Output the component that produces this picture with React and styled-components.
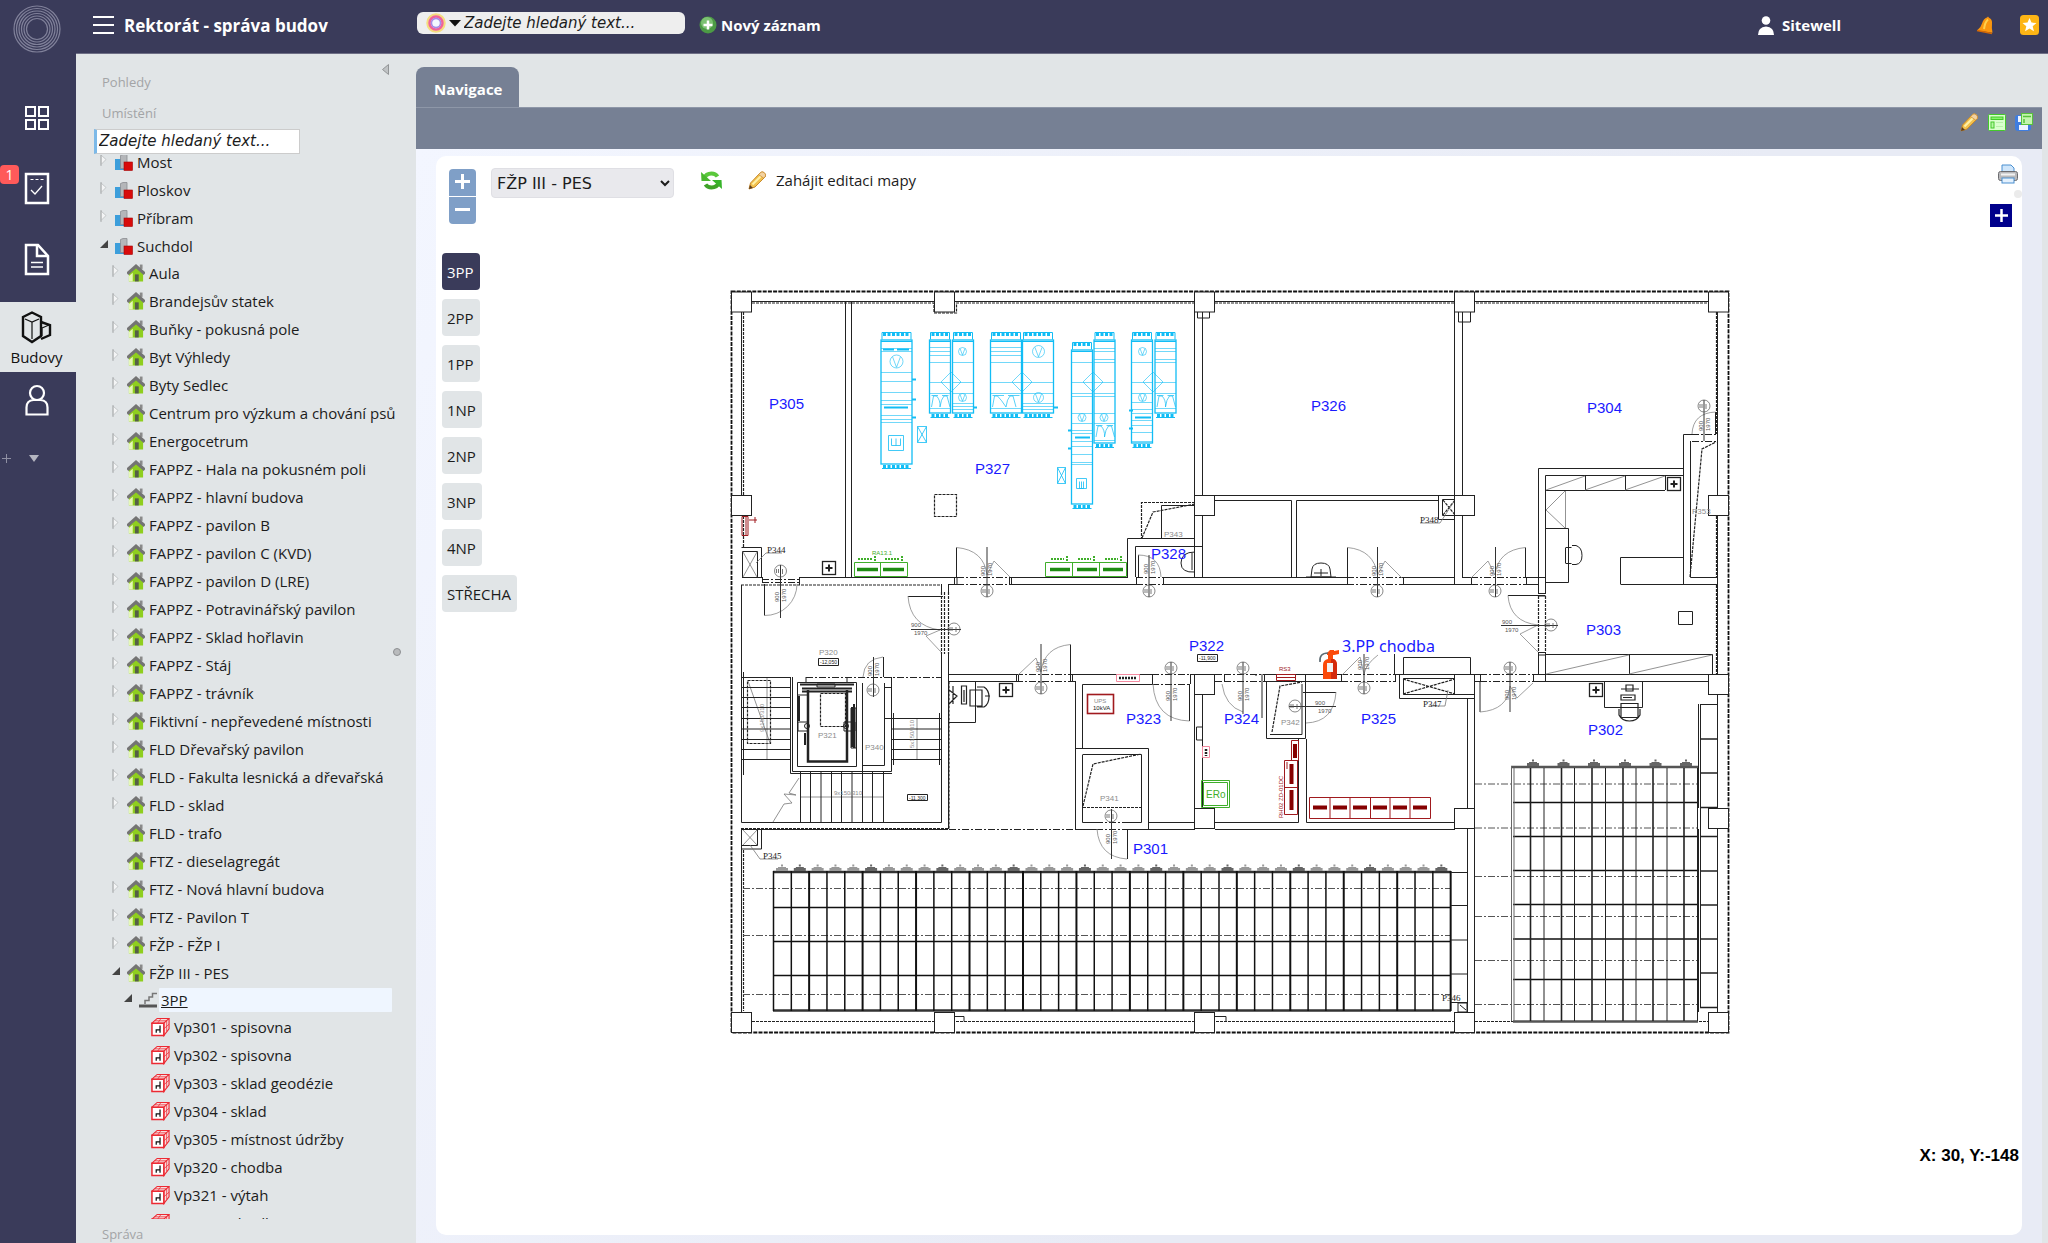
import { useState } from "react";
import styled, { createGlobalStyle } from "styled-components";

const GlobalStyle = createGlobalStyle`
  * {
    box-sizing: border-box;
  }

  body {
    margin: 0;
    font-family: "Open Sans", "Noto Sans", sans-serif;
    font-size: 15px;
    color: #1c1c1c;
    background-color: #e1e5e7;
  }

  button, input, select {
    font: inherit;
    color: inherit;
  }

  button {
    padding: 0;
    border: none;
    background: none;
    cursor: pointer;
  }

  svg {
    display: block;
    flex-shrink: 0;
  }
`;

// LAYOUT

const Page = styled.div`
  display: flex;
  height: 100vh;
`;

const Main = styled.div`
  display: flex;
  flex-direction: column;
  flex: 1;
  min-width: 0;
`;

const Columns = styled.div`
  display: flex;
  flex: 1;
  min-height: 0;
`;

// RAIL

const RailBar = styled.nav`
  display: flex;
  flex-direction: column;
  width: 76px;
  flex-shrink: 0;
  background-color: #3a3b5a;
`;

const Logo = styled.div`
  display: flex;
  justify-content: center;
  height: 82px;
  padding: 5px 3px 0 0;
`;

const RailButton = styled.button`
  position: relative;
  display: flex;
  flex-direction: column;
  align-items: center;
  justify-content: center;
  width: 76px;
  height: ${({ $last }) => ($last ? "56px" : "71px")};
  padding-right: 2px;
  color: #ffffff;
`;

const RailActive = styled(RailButton)`
  height: 70px;
  margin-top: 7px;
  padding: 4px 3px 0 0;
  gap: 3px;
  line-height: 20px;
  color: #111111;
  background-color: #e1e5e7;
`;

const Badge = styled.span`
  position: absolute;
  top: 12px;
  left: 0;
  width: 19px;
  height: 19px;
  border-radius: 4px;
  font-size: 14px;
  line-height: 19px;
  background-color: #ff5a5a;
`;

const RailFoot = styled.div`
  display: flex;
  align-items: center;
  gap: 18px;
  padding: 26px 0 0 2px;
`;

// HEADER

const Header = styled.header`
  display: flex;
  align-items: center;
  height: 54px;
  flex-shrink: 0;
  padding: 0 9px 3px 17px;
  border-bottom: 1px solid #6e6f86;
  font-weight: bold;
  color: #ffffff;
  background-color: #3a3b5a;
`;

const Brand = styled.div`
  display: flex;
  align-items: center;
  gap: 10px;
  width: 324px;
  font-size: 17px;
`;

const SearchBox = styled.label`
  display: flex;
  align-items: center;
  width: 268px;
  height: 22px;
  margin-bottom: 4px;
  padding-left: 9px;
  border-radius: 6px;
  background-color: #eeeeee;
`;

const SearchInput = styled.input`
  width: 100%;
  min-width: 0;
  padding: 0 0 0 2px;
  border: none;
  outline: none;
  font: italic 15px "DejaVu Sans", sans-serif;
  color: #1c1c1c;
  background: none;

  &::placeholder {
    color: #1c1c1c;
    opacity: 1;
  }
`;

const HeaderButton = styled.button`
  display: flex;
  align-items: center;
  gap: ${({ $gap }) => $gap || 4}px;
  margin-left: ${({ $left }) => $left || 0}px;
  font-weight: bold;
`;

const HeaderRight = styled.div`
  display: flex;
  align-items: center;
  margin-left: auto;
`;

// TREE

const Sidebar = styled.aside`
  position: relative;
  display: flex;
  flex-direction: column;
  width: 340px;
  flex-shrink: 0;
  padding: 13px 24px 0 24px;
`;

const SectionTitle = styled.h2`
  margin: 0 0 0 2px;
  font-size: 13px;
  font-weight: normal;
  line-height: 31px;
  color: #a3a4a6;
`;

const TreeSearch = styled.input`
  width: 206px;
  height: 25px;
  flex-shrink: 0;
  margin-left: -6px;
  padding: 0 2px 2px;
  border: 1px solid #cccccc;
  border-left: 3px solid #7cb9e8;
  outline: none;
  font: italic 15px "DejaVu Sans", sans-serif;
  background-color: #ffffff;

  &::placeholder {
    color: #1c1c1c;
    opacity: 1;
  }
`;

const TreeScroll = styled.div`
  flex: 1;
  min-height: 0;
  margin: 1px -12px 0 0;
  padding-right: 12px;
  overflow: hidden;
`;

const TreeList = styled.ul`
  margin: ${({ $root }) => ($root ? "-7px 0 0 0" : "-1px 0 0 12px")};
  padding: 0;
  list-style: none;
`;

const TreeRow = styled.div`
  display: flex;
  align-items: center;
  height: 28px;
`;

const Arrow = styled.span`
  width: 15px;
  flex-shrink: 0;
  padding-bottom: 5px;
`;

const TreeLink = styled.a`
  flex: 1;
  height: 24px;
  padding-left: 2px;
  margin-left: 2px;
  border-radius: 1px;
  line-height: 24px;
  white-space: nowrap;
  color: #1c1c1c;
  text-decoration: ${({ $selected }) => ($selected ? "underline" : "none")};
  background-color: ${({ $selected }) => ($selected ? "#eff6ff" : "transparent")};
`;

const SidebarFoot = styled.div`
  height: 24px;
  overflow: hidden;
`;

const Collapse = styled.button`
  position: absolute;
  top: 10px;
  right: 27px;
`;

const Splitter = styled.span`
  position: absolute;
  top: 594px;
  right: 15px;
  width: 8px;
  height: 8px;
  border: 1px solid #8d8f92;
  border-radius: 50%;
  background-color: #b9bbbd;
`;

// CONTENT

const Content = styled.main`
  display: flex;
  flex-direction: column;
  flex: 1;
  min-width: 0;
  padding: 13px 6px 0 0;
`;

const Tab = styled.button`
  align-self: flex-start;
  height: 40px;
  padding: 4px 17px 0 18px;
  border-radius: 8px 8px 0 0;
  font-weight: bold;
  color: #ffffff;
  background-color: #768094;
`;

const Band = styled.div`
  display: flex;
  justify-content: flex-end;
  gap: 9px;
  height: 42px;
  flex-shrink: 0;
  padding: 5px 9px 0 0;
  border-top: 1px solid #8e97a8;
  background-color: #768094;
`;

const BandButton = styled.button`
  height: 18px;
`;

const Backdrop = styled.div`
  display: flex;
  flex: 1;
  min-height: 0;
  padding: 7px 20px 8px;
  background-image: linear-gradient(120deg, #f3f6ff, #e8ebf5 60%);
`;

const Panel = styled.section`
  display: flex;
  flex-direction: column;
  flex: 1;
  min-width: 0;
  border-radius: 10px;
  background-color: #ffffff;
`;

const MapBar = styled.div`
  display: flex;
  align-items: flex-start;
  height: 97px;
  padding: 12px 0 0 13px;
`;

const ZoomGroup = styled.div`
  display: flex;
  flex-direction: column;
  gap: 1px;
  width: 27px;
  margin: 1px 15px 0 0;
  border-radius: 4px;
  overflow: hidden;
`;

const ZoomButton = styled.button`
  display: flex;
  align-items: center;
  justify-content: center;
  height: 27px;
  padding-bottom: 2px;
  background-color: #7f9fc7;
`;

const BuildingSelect = styled.select`
  width: 183px;
  height: 30px;
  padding: 0 1px;
  border: 1px solid #dfdfe4;
  border-radius: 4px;
  font: 16px "DejaVu Sans", sans-serif;
  background-color: #e9e9ed;
`;

const MapAction = styled.button`
  display: flex;
  align-items: center;
  gap: 9px;
  height: 24px;
  margin-left: ${({ $left }) => $left}px;
`;

const SideTools = styled.div`
  display: flex;
  flex-direction: column;
  align-items: flex-end;
  margin: -4px 0 0 auto;
`;

const PrintButton = styled.button`
  margin-right: 4px;
`;

const Dot = styled.span`
  width: 8px;
  height: 8px;
  margin: 6px 0;
  border-radius: 50%;
  background-color: #ebebeb;
`;

const AddLayer = styled.button`
  display: flex;
  align-items: center;
  justify-content: center;
  width: 22px;
  height: 23px;
  margin-right: 10px;
  background-color: #00008b;
`;

const MapBody = styled.div`
  display: grid;
  justify-items: start;
  align-items: start;
  flex: 1;
  min-height: 0;
`;

const Floors = styled.div`
  grid-area: 1 / 1;
  display: flex;
  flex-direction: column;
  align-items: flex-start;
  gap: 9px;
  padding-left: 6px;
  z-index: 1;
`;

const FloorButton = styled.button`
  height: 37px;
  padding: 0 6px 0 5px;
  border-radius: 4px;
  color: ${({ $active }) => ($active ? "#ffffff" : "#1c1c1c")};
  background-color: ${({ $active }) => ($active ? "#3a3b5a" : "#e1e5e7")};
`;

const PlanHolder = styled.div`
  grid-area: 1 / 1;
  justify-self: center;
  padding-top: 28px;
`;

const Coordinates = styled.div`
  align-self: flex-end;
  padding: 0 3px 69px 0;
  font: bold 17px/20px "Liberation Sans", Arial, sans-serif;
  color: #000000;
`;

// ICONS

const LogoIcon = () => (
  <svg width="48" height="48" viewBox="0 0 48 48" fill="none" stroke="#80819a" strokeWidth="1.200">
    <circle cx="24" cy="24" r="23" />
    <circle cx="24" cy="24" r="20.5" />
    <circle cx="24" cy="24" r="18" />
    <circle cx="24" cy="24" r="15.5" />
    <circle cx="24" cy="24" r="13" />
    <circle cx="24" cy="24" r="10.5" />
  </svg>
);

const GridIcon = () => (
  <svg width="26" height="26" viewBox="0 0 26 26" fill="none" stroke="#fff" strokeWidth="2">
    <path d="M2 2h9v9H2zM15 2h9v9h-9zM2 15h9v9H2zM15 15h9v9h-9z" />
  </svg>
);

const TaskIcon = () => (
  <svg width="26" height="33" viewBox="0 0 26 33" fill="none" stroke="#fff">
    <path d="M2 2h22v29H2z" strokeWidth="2.5" />
    <path d="M6.500 7.500h13" strokeDasharray="3 2" />
    <path d="M7 18l4 4 7-8" strokeWidth="1.300" />
  </svg>
);

const DocIcon = () => (
  <svg width="26" height="33" viewBox="0 0 26 33" fill="none" stroke="#fff" strokeWidth="2.500">
    <path d="M2 2h12l10 11v18H2z" />
    <path d="M13 2v11h11" />
    <path d="M7 19.500h12M7 24h12" strokeWidth="1.300" />
  </svg>
);

const BuildingIcon = () => (
  <svg width="31" height="33" viewBox="0 0 31 33" fill="none" stroke="#111" strokeWidth="2.400">
    <path d="M2 6l9-4.500L20 6v19l-9 6-9-6z" />
    <path d="M20 11l9 3v10l-9 4" />
    <path d="M4 8l7 3 7-3M11 11v17M21 17l7-3M21 17v8" strokeWidth="1.200" />
  </svg>
);

const PersonIcon = () => (
  <svg width="26" height="32" viewBox="0 0 26 32" fill="none" stroke="#fff" strokeWidth="2.200">
    <circle cx="13" cy="9" r="7" />
    <path d="M2.500 30.500v-7q0-7 7-7.500h7q7 .5 7 7.500v7z" />
  </svg>
);

const MenuIcon = () => (
  <svg width="21" height="20" viewBox="0 0 21 20" stroke="#fff" strokeWidth="2">
    <path d="M0 2h21M0 10h21M0 18h21" />
  </svg>
);

const WheelIcon = () => (
  <svg width="20" height="20" viewBox="0 0 20 20" fill="none">
    <circle cx="10" cy="10" r="8.500" stroke="#f5dd7e" strokeWidth="2.500" />
    <circle cx="10" cy="10" r="6.500" stroke="#f0639a" strokeWidth="2.500" />
    <circle cx="10" cy="10" r="4.500" stroke="#a78be8" strokeWidth="1.800" />
    <circle cx="10" cy="10" r="3.500" fill="#f3f8ff" />
  </svg>
);

const PlusBall = () => (
  <svg width="18" height="18" viewBox="0 0 18 18">
    <circle cx="9" cy="9" r="8.500" fill="#4c9a45" />
    <circle cx="8" cy="7" r="6" fill="#7cc172" />
    <path d="M9 4.500v9M4.500 9h9" stroke="#fff" strokeWidth="2.500" />
  </svg>
);

const UserIcon = () => (
  <svg width="16" height="19" viewBox="0 0 16 19" fill="#fff">
    <circle cx="8" cy="4.500" r="4.300" />
    <path d="M0 19q0-8 8-8.500 8 .5 8 8.500z" />
  </svg>
);

const BellIcon = () => (
  <svg width="18" height="19" viewBox="0 0 18 19">
    <path d="M1 14.500q4-3 5-7 1.500-5 5-6l1-1 1 1.300q3.500 1.500 3 6-.5 4 .5 9z" fill="#f9960f" />
    <path d="M8 13q1-7 4-9.500" stroke="#ffd04d" strokeWidth="2" fill="none" />
    <path d="M1 14.500l15 3" stroke="#d66a05" strokeWidth="1.500" />
  </svg>
);

const StarIcon = () => (
  <svg width="19" height="20" viewBox="0 0 19 20">
    <rect width="19" height="20" rx="3.500" fill="#fdb515" />
    <path d="M9.500 3l2 4.600 5 .4-3.800 3.300 1.200 5-4.400-2.700-4.400 2.700 1.200-5L2.500 8l5-.4z" fill="#fff" />
  </svg>
);

const PencilIcon = () => (
  <svg width="19" height="19" viewBox="0 0 19 19">
    <path d="M1 18l1.500-6L12 2q2-2 4-.5t1.500 4L7 16z" fill="#f2c14e" stroke="#c98a2b" />
    <path d="M4.500 13.500L14 4" stroke="#fff0a8" strokeWidth="2" />
    <path d="M12 2q2-2 4-.5t1.500 4L15.500 7 10.500 3.500z" fill="#f3d2a0" stroke="#c98a2b" strokeWidth=".7" />
    <path d="M1 18l1-4 3 3z" fill="#5c3d20" />
  </svg>
);

const FormIcon = () => (
  <svg width="18" height="17" viewBox="0 0 18 17" stroke="#44c92a">
    <rect x=".5" y=".5" width="17" height="16" rx="1" fill="#d9ffcd" />
    <rect x="3" y="3" width="12" height="2.500" fill="#86f56a" />
    <rect x="3" y="8" width="3" height="6" fill="#b5f7a4" />
    <path d="M8 8.500h7M8 12.500h7" stroke="#b9f2aa" />
  </svg>
);

const SaveFormIcon = () => (
  <svg width="18" height="18" viewBox="0 0 18 18">
    <rect x="0" y="2" width="16" height="16" rx="3" fill="#3f7de0" />
    <path d="M3 3h4v6H3zM4 12h9v5H4z" fill="#eef4ff" />
    <rect x="6.500" y=".5" width="11" height="11" fill="#c3f5ae" stroke="#58c23c" />
    <path d="M8 3.500h8M9 6v4" stroke="#58c23c" strokeWidth="1.500" />
  </svg>
);

const RefreshIcon = () => (
  <svg width="21" height="19" viewBox="0 0 21 19">
    <path d="M3 7.500Q5 2.500 10.500 2.500q4 0 6 3" fill="none" stroke="#5bc83c" strokeWidth="4" />
    <path d="M0 1l.5 9H10z" fill="#4ab82e" />
    <path d="M18 11.500q-2 5-7.500 5-4 0-6-3" fill="none" stroke="#3fa328" strokeWidth="4" />
    <path d="M21 18l-.5-9H11z" fill="#38b42a" />
  </svg>
);

const PrinterIcon = () => (
  <svg width="20" height="20" viewBox="0 0 20 20">
    <path d="M4 9V1h9l3 3v5z" fill="#cfe6fb" stroke="#4a8fd0" />
    <rect x=".5" y="7.500" width="19" height="9" rx="2" fill="#b9b9bb" stroke="#6c6c70" />
    <path d="M3 10.500h14" stroke="#f2f2f2" strokeWidth="2" />
    <rect x="4" y="14" width="12" height="5" fill="#e4f1fd" stroke="#4a8fd0" />
  </svg>
);

const SiteIcon = () => (
  <svg width="18" height="17" viewBox="0 0 18 17">
    <rect x="0" y="5" width="9" height="11" fill="#3c9edb" />
    <path d="M5.500 1.500L8 .5h4v14H5.500z" fill="#b4b6b9" stroke="#8b8d90" strokeWidth=".8" />
    <rect x="9" y="8" width="8.500" height="8.500" fill="#d80b0b" stroke="#a30606" strokeWidth=".6" />
  </svg>
);

const HouseIcon = () => (
  <svg width="18" height="18" viewBox="1 0 16 16.500">
    <path d="M2.500 8L9 3l6.500 5v8h-13z" fill="#8fce1e" />
    <path d="M2.500 11L6 8v8H2.500z" fill="#e6f7b8" />
    <path d="M12.500 0.500h2.500v4h-2.500z" fill="#8a8a8a" />
    <path d="M1 9l8-7 8 7" fill="none" stroke="#747474" strokeWidth="3" />
    <rect x="8" y="9.500" width="3.500" height="6.500" fill="#555f47" />
  </svg>
);

const StairsIcon = () => (
  <svg width="18" height="16" viewBox="0 0 18 16" fill="none">
    <path d="M0 14h18" stroke="#555" strokeWidth="3" />
    <path d="M6 12V8.500h4V5h3.500V1.500H18" stroke="#777" strokeWidth="1.500" />
  </svg>
);

const RoomIcon = () => (
  <svg width="19" height="20" viewBox="0 0 20 20" fill="none" stroke="#ec2a33">
    <path d="M1 6l5.500-5H19l-5.500 5zM19 1v11l-5.500 7V6" fill="#f7dcde" strokeWidth="1.200" />
    <path d="M1 6h12.500v13H1z" fill="#fff" strokeWidth="1.600" />
    <path d="M10.500 1L7 6M4 3.500h12M16.500 3.500v11M13.500 12l5.500-5" strokeWidth=".8" />
    <path d="M9.500 8.500v7.500M5.500 16v-3h4" stroke="#111" strokeWidth="1.300" />
  </svg>
);

const icons = { site: SiteIcon, house: HouseIcon, stairs: StairsIcon, room: RoomIcon };

const ClosedArrow = () => (
  <svg width="7" height="12" viewBox="0 0 7 12">
    <path d="M1 1l5 4.500-5 5z" fill="#f4f5f6" stroke="#b9bcbe" strokeWidth=".8" />
    <path d="M1 0v12" stroke="#a9acae" />
  </svg>
);

const OpenArrow = () => (
  <svg width="9" height="8" viewBox="0 0 9 8">
    <path d="M8 0v8H0z" fill="#444" />
  </svg>
);

// DATA

const house = (name, closed = true) => ({ name, icon: "house", closed });
const room = (name) => ({ name, icon: "room" });

const tree = [
  { name: "Most", icon: "site", closed: true },
  { name: "Ploskov", icon: "site", closed: true },
  { name: "Příbram", icon: "site", closed: true },
  {
    name: "Suchdol",
    icon: "site",
    children: [
      house("Aula"),
      house("Brandejsův statek"),
      house("Buňky - pokusná pole"),
      house("Byt Výhledy"),
      house("Byty Sedlec"),
      house("Centrum pro výzkum a chování psů"),
      house("Energocetrum"),
      house("FAPPZ - Hala na pokusném poli"),
      house("FAPPZ - hlavní budova"),
      house("FAPPZ - pavilon B"),
      house("FAPPZ - pavilon C (KVD)"),
      house("FAPPZ - pavilon D (LRE)"),
      house("FAPPZ - Potravinářský pavilon"),
      house("FAPPZ - Sklad hořlavin"),
      house("FAPPZ - Stáj"),
      house("FAPPZ - trávník"),
      house("Fiktivní - nepřevedené místnosti"),
      house("FLD Dřevařský pavilon"),
      house("FLD - Fakulta lesnická a dřevařská"),
      house("FLD - sklad"),
      house("FLD - trafo", false),
      house("FTZ - dieselagregát", false),
      house("FTZ - Nová hlavní budova"),
      house("FTZ - Pavilon T"),
      house("FŽP - FŽP I"),
      {
        name: "FŽP III - PES",
        icon: "house",
        children: [
          {
            name: "3PP",
            icon: "stairs",
            selected: true,
            children: [
              room("Vp301 - spisovna"),
              room("Vp302 - spisovna"),
              room("Vp303 - sklad geodézie"),
              room("Vp304 - sklad"),
              room("Vp305 - místnost údržby"),
              room("Vp320 - chodba"),
              room("Vp321 - výtah"),
              room("Vp322 - chodba"),
            ],
          },
        ],
      },
    ],
  },
];

const floors = ["3PP", "2PP", "1PP", "1NP", "2NP", "3NP", "4NP", "STŘECHA"];

const Branch = ({ items, root }) => (
  <TreeList $root={root}>
    {items.map((item) => {
      const Icon = icons[item.icon];
      return (
        <li key={item.name}>
          <TreeRow>
            <Arrow>
              {item.closed && <ClosedArrow />}
              {item.children && <OpenArrow />}
            </Arrow>
            <Icon />
            <TreeLink href="#" $selected={item.selected}>{item.name}</TreeLink>
          </TreeRow>
          {item.children && <Branch items={item.children} />}
        </li>
      );
    })}
  </TreeList>
);

// FLOOR PLAN

const PlanText = styled.text`
  font-family: "Liberation Sans", Arial, sans-serif;
  font-size: 15px;
  fill: #1a1aff;
`;

const HallText = styled.text`
  font-family: "Noto Sans", sans-serif;
  font-size: 16px;
  fill: #1a1aff;
`;

const NoteText = styled.text`
  font-family: "Liberation Sans", Arial, sans-serif;
  font-size: ${({ $size }) => $size || 8}px;
  fill: ${({ $fill }) => $fill || "#8c8c8c"};
`;

const SerifNote = styled.text`
  font-family: "Liberation Serif", serif;
  font-size: 9px;
  fill: #222222;
`;

const labels = [
  ["P305", 769, 409], ["P327", 975, 474], ["P328", 1151, 559], ["P326", 1311, 411],
  ["P304", 1587, 413], ["P322", 1189, 651], ["P323", 1126, 724], ["P324", 1224, 724],
  ["P325", 1361, 724], ["P303", 1586, 635], ["P302", 1588, 735], ["P301", 1133, 854],
];

const notes = [
  ["P320", 819, 655], ["P321", 818, 738], ["P340", 865, 750], ["P341", 1100, 801],
  ["P342", 1281, 725], ["P343", 1164, 537], ["P353", 1692, 514],
];

const serifNotes = [
  ["P344", 767, 553], ["P345", 763, 859], ["P346", 1442, 1001], ["P347", 1423, 707], ["P348", 1420, 523],
];

// [x, y] of the top left corner, all 20 x 20
const pillars = [
  [731.5, 292], [934.5, 292], [1194.5, 292], [1454.5, 292], [1708.5, 292],
  [731.5, 495.5], [1194.5, 495.5], [1454.5, 495.5], [1708.5, 495.5],
  [1194.5, 674.5], [1454.5, 674.5], [1708.5, 674.5],
  [1194.5, 808.5], [1454.5, 808.5], [1708.5, 808.5],
  [731.5, 1012.5], [934.5, 1012.5], [1194.5, 1012.5], [1454.5, 1012.5], [1708.5, 1012.5],
];

const walls = [
  // outer walls, inner face
  "M752 301.500H935M955 301.500H1195M1215 301.500H1455M1475 301.500H1708",
  "M741.500 312V495M741.500 829V1012M1717.500 312V495M1717.500 516V674M1717.500 695V808M1717.500 829V1012",
  // between P305 and P327
  "M845.500 302V577M851.500 302V577",
  // corridor, north side
  "M762 577.500H742M799 577.500H957M1011 577.500H1128M1163 577.500H1347M1403 577.500H1455M1462 577.500H1471M1526 577.500H1545",
  "M948 584.500H957M1011 584.500H1137M1163 584.500H1347M1403 584.500H1471M1526 584.500H1538",
  "M957 577v8M954.500 577v8M1011.500 577v8M1009.500 577v8M1136.500 577v8M1163.500 577v8M1347.500 577v8M1403.500 577v8M1471.500 577v8M1526.500 577v8M799.500 577v8M762.500 577v6",
  "M1194.500 312V577M1202.500 312V577M1454.500 312V585M1462.500 312V577",
  "M1215 495.500H1455M1215 500.500H1291.500V577M1296.500 577V500.500H1438",
  "M1438.500 496V519.500H1455M1442.500 499.500h12v16h-12z",
  // P304 and P303
  "M1538.500 593V468.500H1683M1545.500 593V475.500H1683M1538 593.500h8M1538 596h8M1538.500 652V675M1545.500 652V682M1538 652.500h8M1538 655h8",
  "M1546 490.500H1665M1585.500 476V490M1625.500 476V490M1665.500 476V490",
  "M1692 434.500H1683.500V584.500M1690.500 441V577.500H1717M1620.500 584.500H1717M1683 557.500H1620.500V584",
  "M1546 528.500H1568.500V582.500H1546M1678.500 611.500h14v13h-14z",
  "M1546 654.500H1712.500V674M1629.500 655V674",
  // hall and stairs
  "M741.500 585V822.500H941.500V654M941.500 584V592M948.500 584V592M948.500 654V829M741 829.500H948",
  "M741.500 547.500H761.500V577M742.500 551.500h15v26h-15zM742 849H761.500V829M742 845.500h15.500V829",
  // corridor, south side
  "M948 674.500H1016M1072 674.500H1152M1190 674.500H1195M1215 674.500H1222M1264 674.500H1341M1395 674.500H1455M1475 674.500H1480M1533 674.500H1708",
  "M948 681.500H1016M1072 681.500H1076M1215 681.500H1222M1264 681.500H1341M1475 681.500H1480M1533 681.500H1708",
  "M1016.500 674v8M1018.500 674v8M1070.500 674v8M1072.500 674v8M1152.500 674v10M1190.500 674v10M1224.500 674v8M1264.500 674v8M1262 674v44M1341.500 674v8M1395.500 674v8M1480.500 674v8M1533.500 674v8",
  "M1075.500 681V829M1082.500 748V684.500H1152M1076 748.500H1148.500V829M1082.500 754.500H1141.500V822.500H1128M1096 822.500H1082.500V755M1076 829.500H1096M1128 829.500H1195",
  "M1148 822.500H1195M1215 829.500H1455M1215 822.500H1298.500V739M1306.500 739V822.500H1455",
  "M1194.500 695V808M1202.500 695V808M1266.500 682V738.500H1305.500V674M1270 734.500H1302V684",
  "M1399.500 675V698.500H1475M1403.500 678.500h52v16h-52zM1403.500 674V657.500H1470.500V674",
  "M1467.500 698V808M1474.500 695V808M1467.500 829V1012M1474.500 829V1012",
  // P328 and P343
  "M1127.500 577V538.500H1195M1135.500 577V546.500H1202M1161.500 538V505.500H1195",
  // lift shaft
  "M790.500 677V773.500H892M792.500 677V771.500H891.500V677M797.500 682.500h59v84h-59zM862.500 683V765.500H884.500V683M862.500 765V822",
  "M948 722.500H975.500V682M1604.500 682V707.500H1642.500V682",
  // shelves by the windows
  "M1698.500 704V808M1700.500 704.500H1717M1700.500 704V1008M1698.500 829V1012",
  "M955 1016.500h9v5M1215 1016.500h11v5",
  "M1197.500 312v6h12v-6M1458.500 312v10h12v-10",
].join("");

const dashed = [
  "M752 303H934V313H956.500V303H1195M1215 303H1455M1476 303H1708M741 585H941",
  "M743.500 312V495M743.500 516V547M743.500 850V1011M1716.500 312V434M1716.500 585V674M1716.500 516V577",
  "M752 1021.500H935M956 1021.500H1195M1216 1021.500H1455M1475 1021.500H1708",
  "M934.500 494.500h22v22h-22zM741 828.500H949V682M948.500 592V654M944.500 592V654M941.500 592V654",
  "M1195 502.500H1141.500V539M1142 538l11-26 42-8M1083 806l10-42 48-10M1083 807.500H1141",
  "M1272 732l8-46 22-4M1690 577l12-128 14-7M1538.500 596V652M1545.500 596V652",
  "M747.500 680.500h23v63h-23zM820.500 693.500h25v33h-25z",
  "M1403 679l52 15M1403 694l52-15M1443 500l12 15M1443 515l12-15",
].join("");

const dashDot = [
  "M957 577.500H1011M957 584.500H1011M1136 577.500H1163M1136 584.500H1163M1347 577.500H1403M1347 584.500H1403M1471 577.500H1526M1471 584.500H1526",
  "M1016 674.500H1072M1016 681.500H1072M1152 674.500H1190M1152 684.500H1190M1224 674.500H1264M1224 681.500H1264M1341 674.500H1395M1341 681.500H1395M1480 674.500H1533M1480 681.500H1533",
  "M762 579.500H799M762 582.500H799M949 829.500H1076M1096 829.500H1128M1096 822.500H1128M806 677.500H941M1692 434.500H1717M1692 441.500H1717",
].join("");

const thin = [
  "M743 552l14 25M743 577l14-25M756 563l10-10h16M743 830l14 15M743 845l14-15M750 845l10 14h18",
  "M1546 490l39-14M1585 490l40-14M1625 490l40-14M1565.500 491V528M1546 510l19-19M1546 510l19 18",
  "M1546 674l83-19M1629 674l83-19M1455 500l-15 23h-20M1429 706h16l3-16M773 822l11-18M789 793l10-15M784 804l8-1-8-9 12 1-7-2",
  "M767 677V760M917 718V760M800 797H883M748 681l22 62",
].join("");

// leaf, arc and the line with a round mark for each door
const doors = [
  { leaf: "M764.500 584V615.500", arc: "M764.500 615.500A32 32 0 0 0 797 584", line: "M780.500 565V618", mark: [780.5, 571], size: [779, 602, -90] },
  { leaf: "M943 596.500H908", arc: "M908 596Q910 626 940 630L926 636 941 652", line: "M911 629.500H961", mark: [954, 629], size: [911, 627, 0] },
  { leaf: "M956.500 577V547.500", arc: "M956.500 547.500Q984 550 987 575L994 561 1010 577", line: "M987 547V597", mark: [987, 591], size: [985, 576, -90] },
  { leaf: "M1138.500 577V555", arc: "M1138 555Q1160 555 1161 577", line: "M1149 555V597", mark: [1149, 591], size: [1148, 574, -90] },
  { leaf: "M1347.500 577V547.500", arc: "M1347.500 547.500Q1374 550 1377.500 575L1385 561 1402 578", line: "M1377.500 547V597", mark: [1377, 591], size: [1376, 576, -90] },
  { leaf: "M1525.500 577V547.500", arc: "M1525.500 547.500Q1498 550 1495 575L1488 561 1471 578", line: "M1495.500 547V597", mark: [1495, 591], size: [1494, 576, -90] },
  { leaf: "M1545 595.500H1508", arc: "M1508 595.500Q1510 622 1538 625L1520 634 1538 652", line: "M1501 625.500H1558", mark: [1551, 625], size: [1502, 624, 0] },
  { leaf: "M1715.500 435V412", arc: "M1715.500 412Q1693 413 1692 434", line: "M1704 400V441", mark: [1704, 406], size: [1703, 431, -90] },
  { leaf: "M1070.500 674V644.500", arc: "M1070.500 644.500Q1044 647 1041 672L1036 658 1018 675", line: "M1041 644V694", mark: [1041, 688], size: [1040, 672, -90] },
  { leaf: "M1189.500 684V721", arc: "M1189.500 721Q1155 720 1153 684", line: "M1171 662V721", mark: [1171, 668], size: [1170, 701, -90] },
  { leaf: "M1256 674V676", arc: "M1243 712Q1225 706 1222 684", line: "M1243 662V714", mark: [1243, 668], size: [1242, 701, -90] },
  { leaf: "M1303 692.500H1336", arc: "M1336 692Q1334 722 1306 723", line: "M1289 706.500H1336", mark: [1295, 706], size: [1315, 705, 0] },
  { leaf: "M1394.500 654V674", arc: "M1378 655Q1366 664 1364 674L1360 657 1342 675", line: "M1364 654V694", mark: [1364, 688], size: [1362, 670, -90] },
  { leaf: "M1480 681V712", arc: "M1480 712Q1508 710 1510 686L1517 698 1533 683", line: "M1510 662V712", mark: [1510, 668], size: [1509, 700, -90] },
  { leaf: "M1127.500 829V859", arc: "M1127 859Q1099 857 1097 829", line: "M1111.500 809V859", mark: [1111, 816], size: [1110, 844, -90] },
  { leaf: "M883.500 677V657", arc: "M883 657Q864 659 863 677", line: "M873.500 657V697", mark: [873, 690], size: [872, 676, -90] },
];

// air handling units: body box, cross lines and fans
const units = [
  { x: 881, y: 340, w: 31, h: 124, bars: [348, 351, 372, 381, 392, 400, 404, 415, 419, 422], fan: [896.5, 361.5, 6.5], panel: [888.5, 435.5, 15, 15] },
  { x: 929.5, y: 340, w: 21, h: 73, bars: [347, 351, 355, 362, 382, 393, 408], vee: 393 },
  { x: 952.5, y: 340, w: 21, h: 73, bars: [362, 382, 393, 403, 406, 409], fan: [962.5, 351.5, 4], fan2: [962.5, 397.5, 4] },
  { x: 990.5, y: 340, w: 31, h: 73, bars: [347, 351, 355, 362, 382, 393, 408], vee: 393 },
  { x: 1022.5, y: 340, w: 31, h: 73, bars: [362, 382, 393, 403, 406, 409], fan: [1038.5, 351.5, 6], fan2: [1038.5, 397.5, 5] },
  { x: 1071.5, y: 350, w: 21, h: 154, bars: [362, 382, 393, 396, 413, 423, 430, 433, 441, 446, 454, 462, 464], fan: [1082, 417.5, 4], panel: [1076.5, 478.5, 10, 10] },
  { x: 1094, y: 340, w: 21, h: 103, bars: [348, 351, 359, 362, 382, 393, 396, 413, 423, 440], fan: [1104, 417.5, 4], vee: 423 },
  { x: 1131.5, y: 340, w: 21, h: 103, bars: [362, 382, 393, 402, 409, 413, 420, 425, 432, 441], fan: [1142.5, 351.5, 4], fan2: [1142.5, 397.5, 4] },
  { x: 1155, y: 340, w: 21, h: 73, bars: [348, 351, 359, 362, 382, 393, 408], vee: 393 },
];

const Fan = ({ cx, cy, r }) => (
  <path
    d={`M${cx - r} ${cy}a${r} ${r} 0 1 0 ${2 * r} 0a${r} ${r} 0 1 0 ${-2 * r} 0M${cx - r * 0.6} ${cy - r * 0.7}L${cx} ${cy + r * 0.9}L${cx + r * 0.6} ${cy - r * 0.7}`}
    strokeWidth=".6"
  />
);

const Unit = ({ x, y, w, h, bars, fan, fan2, vee, panel }) => (
  <g>
    <rect x={x} y={y} width={w} height={h} strokeWidth="1.300" />
    <path d={`M${x + 2} ${y - 6}H${x + w - 2}M${x + 2} ${y + h + 3}H${x + w - 2}`} strokeWidth="4" strokeDasharray="3 1.500" />
    <path d={`M${x + 1} ${y - 7.500}h${w - 2}v7M${x + 1} ${y - 7.500}v7M${x + 1} ${y + h + 4.500}h${w - 2}M${x} ${y + 1.500}h${w}`} />
    <path d={bars.map((b) => `M${x} ${b + 0.5}h${w}`).join("")} strokeWidth=".6" />
    {vee && (
      <path
        d={`M${x + 2} ${vee + 14}l2-11h3q4 4 ${w / 2 - 7} 11q1-8 4-11h3l3 11M${x + 2} ${vee + 2.500}h${w / 2 - 4}M${x + w / 2 + 2} ${vee + 2.500}h${w / 2 - 4}`}
        strokeWidth=".7"
      />
    )}
    {fan && <Fan cx={fan[0]} cy={fan[1]} r={fan[2]} />}
    {fan2 && <Fan cx={fan2[0]} cy={fan2[1]} r={fan2[2]} />}
    {panel && (
      <path
        d={`M${panel[0]} ${panel[1]}h${panel[2]}v${panel[3]}h${-panel[2]}zM${panel[0] + 3} ${panel[1] + 3}v7h${panel[2] - 6}v-7M${panel[0] + panel[2] / 2} ${panel[1] + 3}v7`}
        strokeWidth=".8"
      />
    )}
  </g>
);

const Cross = ({ x, y }) => (
  <g>
    <rect x={x} y={y} width="13" height="13" fill="#fff" strokeWidth="1.300" />
    <path d={`M${x + 6.500} ${y + 3}v7M${x + 3} ${y + 6.500}h7`} strokeWidth="2" />
  </g>
);

// a cart on the rail above every rack
const Cart = ({ x, y, dark }) => (
  <path
    d={`M${x - 6} ${y}h12v3h-12zM${x - 4} ${y - 1}h8v1h-8zM${x - 1} ${y - 3.500}h2v2h-2z`}
    fill={dark ? "#666" : "#999"}
    stroke="none"
  />
);

const rackLines = Array.from({ length: 39 }, (_, i) => 773.5 + i * 17.82);
const archiveLines = [1530.5, 1544, 1561.5, 1574.5, 1592, 1605.5, 1623, 1636, 1653, 1667, 1684, 1697.5];
const archiveCarts = [1533, 1563.5, 1594, 1625, 1655.5, 1686];
const shelves = [739, 773, 807.5, 836.5, 871, 905, 939, 973, 1007.5];
const leftSteps = [677.5, 687.5, 697.5, 707.5, 718.5, 729, 739.5, 749.5, 759.5];
const rightSteps = [718.5, 729, 739.5, 749.5, 759.5];
const lowerSteps = [800.5, 810.5, 821, 831.5, 841.5, 852, 862.5, 872.5, 883.5];

const FloorPlan = () => (
  <svg width="1020" height="764" viewBox="719 281 1020 764" fill="none" stroke="#222" strokeWidth="1">
    <rect x="731.500" y="291.500" width="997" height="741" strokeWidth="1.800" strokeDasharray="4 1.200" stroke="#111" />
    <path d={walls} />
    <path d={dashed} strokeDasharray="3 1" strokeWidth="1.200" />
    <path d={dashDot} strokeDasharray="7 2 2 2" />
    <path d={thin} stroke="#777" strokeWidth=".8" />
    {pillars.map(([x, y]) => (
      <rect key={`${x}-${y}`} x={x} y={y} width="20" height="20" fill="#fff" />
    ))}

    {/* stairs */}
    <path d={leftSteps.map((y) => `M741 ${y}H791`).join("")} />
    <path d={rightSteps.map((y) => `M892 ${y}H941`).join("")} />
    <path d={lowerSteps.map((x) => `M${x} 772V822`).join("")} />
    <path d="M743.500 672V775M893.500 713V765M939.500 713V765M885 687.500h7M885 718.500h7M806 677v6M847 677v6" />

    {/* lift */}
    <path d="M808 690V761.500H847V690" strokeWidth="2.500" />
    <path d="M800 684.500h54M802 688.500h50M802 691.500h50" strokeWidth="2" />
    <path d="M817 684h18v3h-18zM798 695h9M798 722h10v9h-10zM844 722h11v9h-11zM851 708h5v40h-5z" />
    <path d="M854 704v44M805 733v12M852 707v40M799 696v25" strokeWidth="2" />
    <circle cx="807" cy="726" r="2.500" />
    <circle cx="846" cy="726" r="2.500" />

    {/* moving racks in P301 */}
    <path d="M743 888.500H1450M743 935.500H1450M743 994.500H1450" strokeDasharray="7 2 2 2" stroke="#555" />
    <path d="M773 907.500H1450M773 941.500H1450M773 975.500H1450" stroke="#111" strokeWidth="1.700" />
    <path d="M773 872H1451M773 1010.500H1451" stroke="#333" strokeWidth="2.500" />
    {rackLines.map((x, i) => (
      <path key={x} d={`M${x} 871V1011`} stroke="#111" strokeWidth={i % 3 === 2 ? 2 : 1.500} />
    ))}
    {rackLines.slice(0, -1).map((x, i) => (
      <Cart key={x} x={x + 8.5} y={868} dark={i % 4 === 1} />
    ))}
    <path d="M1451 872.500h17M1451 905.500h17M1451 940h17M1451 974h17M1451 1002.500h17M1458 1003h9v9h-9zM1460 1005l6 5" />

    {/* moving racks in P302 */}
    <path
      d="M1475 784H1697M1475 828H1697M1475 876.500H1697M1475 916.500H1697M1475 960.500H1697M1475 1004.500H1697"
      strokeDasharray="7 2 2 2"
      stroke="#555"
    />
    <path d="M1513 802.500H1698M1513 836.500H1698M1513 870.500H1698M1513 904.500H1698M1513 939H1698M1513 979.500H1698" stroke="#111" strokeWidth="1.500" />
    <path d="M1511 767H1698M1513 1021.500H1698" stroke="#555" strokeWidth="2.500" />
    <path d="M1511.500 766V1021M1514 768V1021" stroke="#666" />
    {archiveLines.map((x, i) => (
      <path key={x} d={`M${x} 768V1021`} stroke="#222" strokeWidth={i % 2 ? 1 : 1.6} />
    ))}
    {archiveCarts.map((x) => (
      <Cart key={x} x={x} y={763} dark />
    ))}
    <path d={shelves.map((y) => `M1700 ${y}H1717`).join("")} strokeWidth="1.400" />

    {/* doors */}
    {doors.map((door) => (
      <g key={door.line} stroke="#555">
        <path d={door.leaf} stroke="#222" />
        <path d={door.arc} stroke="#888" strokeWidth=".8" />
        <path d={door.line} stroke="#333" />
        <circle cx={door.mark[0]} cy={door.mark[1]} r="6" strokeWidth=".7" />
        <path d={`M${door.mark[0] - 4} ${door.mark[1] + 2}v-4M${door.mark[0] - 2} ${door.mark[1] + 2}v-4M${door.mark[0] + 2} ${door.mark[1] + 3}v-5`} strokeWidth=".8" />
        <NoteText
          $size={6}
          $fill="#555"
          stroke="none"
          transform={`translate(${door.size[0]} ${door.size[1]}) rotate(${door.size[2]})`}
        >
          900
        </NoteText>
        <NoteText
          $size={6}
          $fill="#555"
          stroke="none"
          transform={`translate(${door.size[0] + (door.size[2] ? 7 : 3)} ${door.size[1] + (door.size[2] ? 0 : 8)}) rotate(${door.size[2]})`}
        >
          1970
        </NoteText>
      </g>
    ))}

    {/* air handling */}
    <g stroke="#12bdf5">
      {units.map((unit) => (
        <Unit key={unit.x} {...unit} />
      ))}
      <path d="M941 382l10-10 10 10-10 10zM1012 382l10-10 10 10-10 10zM1083 382l10-10 10 10-10 10zM1143 382l10-10 10 10-10 10z" strokeWidth=".6" />
      <path d="M917.500 426.500h9v16h-9zM917.500 426.500l9 16M926.500 426.500l-9 16M1057.500 467.500h8v16h-8zM1057.500 467.500l8 16M1065.500 467.500l-8 16" strokeWidth=".8" />
      <path d="M883 349.500h11M897 349.500h12M884 407.500h24M1075 437.500h15M1135 417.500h16M912 379.500h4M912 399.500h4M912 417.500h4M973 407.500h4M1054 407.500h4M1068 430.500h4M1068 448.500h4M1129 410.500h4M1129 428.500h4" strokeWidth="2" />
    </g>

    {/* switchboards */}
    <g stroke="#3fae2a">
      <path d="M854.500 562.500h53v14h-53zM880.500 562v14M1045.500 562.500h81v14h-81zM1072.500 562v14M1099.500 562v14" />
      <path d="M857 569.500h21M883 569.500h21M1050 569.500h20M1077 569.500h20M1103 569.500h20" stroke="#1e8c12" strokeWidth="3.500" />
      <path d="M1201.500 780.500h28v27h-28zM1203.500 782.500h24v23h-24z" />
      <path d="M858 559h14M875 561v-5M885 559h14M902 561v-5M1051 559h13M1067 561v-5M1078 559h13M1094 561v-5M1105 559h13M1121 561v-5" strokeWidth="2" strokeDasharray="2 1" />
    </g>
    <NoteText x="872" y="555" $size={6} $fill="#3fae2a" stroke="none">RA13.1</NoteText>
    <NoteText x="1206" y="798" $size={10} $fill="#3fae2a" stroke="none">ERo</NoteText>
    <g stroke="#a01a1e">
      <path d="M1309.500 797.500h121v21h-121zM1330 797v21M1350 797v21M1370.500 797v21M1390 797v21M1410 797v21" />
      <path d="M1313 807.500h14M1333 807.500h14M1353 807.500h14M1373 807.500h14M1393 807.500h14M1413 807.500h14" stroke="#850000" strokeWidth="4" />
      <path d="M1291.500 740.500h7v20h-7zM1284.500 760.500h13v54h-13zM1284.500 787.500h13" />
      <path d="M1295 744v14M1291.500 764v20M1291.500 790v20" stroke="#850000" strokeWidth="4" />
      <rect x="1087.500" y="694.500" width="26" height="19" strokeWidth="1.600" />
      <path d="M1276.500 674.500h19v6h-19zM1276 677.500h20M742 516.500h6v19h-6zM746 516v19M749 520h8M755 517v6M1287 762v7" />
    </g>
    <NoteText stroke="none" $size={6} $fill="#a01a1e" transform="translate(1283 818) rotate(-90)">RH02 ZD-01DC</NoteText>
    <NoteText x="1279" y="671" $size={6} $fill="#a01a1e" stroke="none">RS3</NoteText>
    <NoteText x="1094" y="703" $size={6} stroke="none">UPS</NoteText>
    <NoteText x="1093" y="710" $size={6} $fill="#222" stroke="none">10kVA</NoteText>
    <path d="M1116.500 674.500h23v7h-23zM1202.500 746.500h7v11h-7z" stroke="#f48aa0" fill="#fff" />
    <path d="M1119 678h18M1206 749v7" strokeWidth="2.500" strokeDasharray="2 1" />

    {/* furniture */}
    <Cross x={822.5} y={561.5} />
    <Cross x={999.5} y={683.5} />
    <Cross x={1667.5} y={477.5} />
    <Cross x={1589.5} y={683.5} />
    <path d="M1311 577l1-8q1-6 9-6t9 6l1 8zM1306 577h30M1314 573h14M1321 569v7M1195 552q-14 0-14 11 0 10 14 9M1192 553v17" />
    <path d="M1572 545.500h4q6 2 6 10t-6 9h-4M1565.500 547.500h6M1565.500 563.500h6M1565.500 548v15" />
    <path d="M970 690h12v16h-12zM977 687h7q5 3 5 10t-5 10h-7M961.500 686v18h5v-18zM964 690v12M953 686v18M949 690l8 6-8 8M985 696h5" strokeWidth="1.200" />
    <path d="M1621 703.500h17v14h-17zM1619 709v6q3 6 10.500 6t10.500-6v-6M1621 695h14v5h-14zM1623 697.500h9M1621 689h18M1626 685h7v6h-7z" strokeWidth="1.200" />
    <path d="M1196.500 727h6v13h-6z" />
    <path d="M818.500 658.500h20v7h-20zM907.500 794.500h20v6h-20zM1197.500 654.500h20v7h-20z" />
    <NoteText x="820" y="664" $size={5} $fill="#222" stroke="none">-12,050</NoteText>
    <NoteText x="909" y="800" $size={5} $fill="#222" stroke="none">-11,300</NoteText>
    <NoteText x="1199" y="660" $size={5} $fill="#222" stroke="none">-11,900</NoteText>
    <NoteText x="834" y="795" $size={6} stroke="none">9x150/310</NoteText>
    <NoteText stroke="none" $size={6} transform="translate(764 732) rotate(-90)">9x150/310</NoteText>
    <NoteText stroke="none" $size={6} transform="translate(914 748) rotate(-90)">5x150/310</NoteText>

    {notes.map(([text, x, y]) => (
      <NoteText key={text} x={x} y={y} stroke="none">{text}</NoteText>
    ))}
    {serifNotes.map(([text, x, y]) => (
      <SerifNote key={text} x={x} y={y} stroke="none">{text}</SerifNote>
    ))}
    {labels.map(([text, x, y]) => (
      <PlanText key={text} x={x} y={y} stroke="none">{text}</PlanText>
    ))}
    <HallText x="1342" y="652" stroke="none">3.PP chodba</HallText>

    {/* fire extinguisher */}
    <g stroke="none">
      <path d="M1323 665q0-5 5-6v-4h5v4q4 1 4 6v14h-14z" fill="#fb4a0a" />
      <path d="M1331 659h3q3 2 3 6v14h-6z" fill="#d42a0c" />
      <rect x="1327" y="663" width="6" height="9" fill="#f3f3f3" />
      <path d="M1327 653l3-3h4v1l5-1v4l-5 1h-7z" fill="#fb4a0a" />
      <path d="M1328 653q-9 0-8 9" fill="none" stroke="#5d6b73" strokeWidth="1.600" />
    </g>
  </svg>
);

const Rail = () => (
  <RailBar>
    <Logo><LogoIcon /></Logo>
    <RailButton aria-label="Přehled"><GridIcon /></RailButton>
    <RailButton aria-label="Úkoly">
      <Badge>1</Badge>
      <TaskIcon />
    </RailButton>
    <RailButton aria-label="Dokumenty"><DocIcon /></RailButton>
    <RailActive>
      <BuildingIcon />
      Budovy
    </RailActive>
    <RailButton $last aria-label="Osoby"><PersonIcon /></RailButton>
    <RailFoot>
      <button aria-label="Přidat">
        <svg width="9" height="9" viewBox="0 0 9 9" stroke="#8f90a3"><path d="M4.500 0v9M0 4.500h9" /></svg>
      </button>
      <button aria-label="Další">
        <svg width="10" height="7" viewBox="0 0 10 7" fill="#b4b5c0"><path d="M0 0h10L5 7z" /></svg>
      </button>
    </RailFoot>
  </RailBar>
);

export default function App() {
  const [floor, setFloor] = useState("3PP");

  return (
    <>
      <GlobalStyle />
      <Page>
        <Rail />
        <Main>
          <Header>
            <Brand>
              <button aria-label="Menu"><MenuIcon /></button>
              Rektorát - správa budov
            </Brand>
            <SearchBox>
              <WheelIcon />
              <svg width="16" height="7" viewBox="0 0 16 7" fill="#111"><path d="M3 0h12L9 6.500z" /></svg>
              <SearchInput aria-label="Hledat" placeholder="Zadejte hledaný text..." />
            </SearchBox>
            <HeaderButton $left={14}>
              <PlusBall />
              Nový záznam
            </HeaderButton>
            <HeaderRight>
              <HeaderButton $gap={8}>
                <UserIcon />
                Sitewell
              </HeaderButton>
              <HeaderButton $left={135} aria-label="Upozornění"><BellIcon /></HeaderButton>
              <HeaderButton $left={26} aria-label="Oblíbené"><StarIcon /></HeaderButton>
            </HeaderRight>
          </Header>
          <Columns>
            <Sidebar>
              <Collapse aria-label="Skrýt panel">
                <svg width="7" height="11" viewBox="0 0 7 11"><path d="M6.500 .5v10L.5 5.500z" fill="#c0c3c5" stroke="#929597" /></svg>
              </Collapse>
              <Splitter />
              <SectionTitle>Pohledy</SectionTitle>
              <SectionTitle>Umístění</SectionTitle>
              <TreeSearch aria-label="Hledat ve stromu" placeholder="Zadejte hledaný text..." />
              <TreeScroll>
                <Branch items={tree} root />
              </TreeScroll>
              <SidebarFoot>
                <SectionTitle>Správa</SectionTitle>
              </SidebarFoot>
            </Sidebar>
            <Content>
              <Tab>Navigace</Tab>
              <Band>
                <BandButton aria-label="Upravit"><PencilIcon /></BandButton>
                <BandButton aria-label="Formulář"><FormIcon /></BandButton>
                <BandButton aria-label="Uložit formulář"><SaveFormIcon /></BandButton>
              </Band>
              <Backdrop>
                <Panel>
                  <MapBar>
                    <ZoomGroup>
                      <ZoomButton aria-label="Přiblížit">
                        <svg width="15" height="15" viewBox="0 0 15 15" stroke="#fff" strokeWidth="3"><path d="M7.500 0v15M0 7.500h15" /></svg>
                      </ZoomButton>
                      <ZoomButton aria-label="Oddálit">
                        <svg width="15" height="15" viewBox="0 0 15 15" stroke="#fff" strokeWidth="3"><path d="M0 7.500h15" /></svg>
                      </ZoomButton>
                    </ZoomGroup>
                    <BuildingSelect aria-label="Budova" defaultValue="pes">
                      <option value="pes">FŽP III - PES</option>
                    </BuildingSelect>
                    <MapAction $left={27} aria-label="Obnovit"><RefreshIcon /></MapAction>
                    <MapAction $left={26}>
                      <PencilIcon />
                      Zahájit editaci mapy
                    </MapAction>
                    <SideTools>
                      <PrintButton aria-label="Tisk"><PrinterIcon /></PrintButton>
                      <Dot />
                      <AddLayer aria-label="Vrstvy">
                        <svg width="13" height="13" viewBox="0 0 13 13" stroke="#fff" strokeWidth="2.500"><path d="M6.500 0v13M0 6.500h13" /></svg>
                      </AddLayer>
                    </SideTools>
                  </MapBar>
                  <MapBody>
                    <Floors>
                      {floors.map((name) => (
                        <FloorButton key={name} $active={name === floor} onClick={() => setFloor(name)}>
                          {name}
                        </FloorButton>
                      ))}
                    </Floors>
                    <PlanHolder>
                      <FloorPlan />
                    </PlanHolder>
                  </MapBody>
                  <Coordinates>X: 30, Y:-148</Coordinates>
                </Panel>
              </Backdrop>
            </Content>
          </Columns>
        </Main>
      </Page>
    </>
  );
}
